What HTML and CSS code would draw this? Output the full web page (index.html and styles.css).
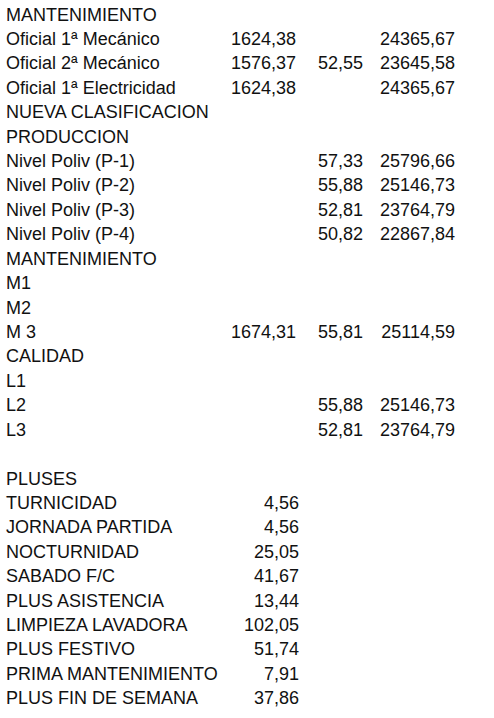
FILE: index.html
```html
<!DOCTYPE html>
<html lang="es">
<head>
<meta charset="utf-8">
<title>Tabla salarial</title>
<link rel="stylesheet" href="styles.css">
</head>
<body>
<div class="sheet">
  <div class="grid">
    <div class="row"><span class="lbl">MANTENIMIENTO</span><span></span><span></span><span></span></div>
    <div class="row"><span class="lbl">Oficial 1ª Mecánico</span><span class="num">1624,38</span><span class="num"></span><span class="num">24365,67</span></div>
    <div class="row"><span class="lbl">Oficial 2ª Mecánico</span><span class="num">1576,37</span><span class="num">52,55</span><span class="num">23645,58</span></div>
    <div class="row"><span class="lbl">Oficial 1ª Electricidad</span><span class="num">1624,38</span><span class="num"></span><span class="num">24365,67</span></div>
    <div class="row"><span class="lbl">NUEVA CLASIFICACION</span><span></span><span></span><span></span></div>
    <div class="row"><span class="lbl">PRODUCCION</span><span></span><span></span><span></span></div>
    <div class="row"><span class="lbl">Nivel Poliv (P-1)</span><span class="num"></span><span class="num">57,33</span><span class="num">25796,66</span></div>
    <div class="row"><span class="lbl">Nivel Poliv (P-2)</span><span class="num"></span><span class="num">55,88</span><span class="num">25146,73</span></div>
    <div class="row"><span class="lbl">Nivel Poliv (P-3)</span><span class="num"></span><span class="num">52,81</span><span class="num">23764,79</span></div>
    <div class="row"><span class="lbl">Nivel Poliv (P-4)</span><span class="num"></span><span class="num">50,82</span><span class="num">22867,84</span></div>
    <div class="row"><span class="lbl">MANTENIMIENTO</span><span></span><span></span><span></span></div>
    <div class="row"><span class="lbl">M1</span><span></span><span></span><span></span></div>
    <div class="row"><span class="lbl">M2</span><span></span><span></span><span></span></div>
    <div class="row"><span class="lbl">M 3</span><span class="num">1674,31</span><span class="num">55,81</span><span class="num">25114,59</span></div>
    <div class="row"><span class="lbl">CALIDAD</span><span></span><span></span><span></span></div>
    <div class="row"><span class="lbl">L1</span><span></span><span></span><span></span></div>
    <div class="row"><span class="lbl">L2</span><span class="num"></span><span class="num">55,88</span><span class="num">25146,73</span></div>
    <div class="row"><span class="lbl">L3</span><span class="num"></span><span class="num">52,81</span><span class="num">23764,79</span></div>
    <div class="row"><span class="lbl">&nbsp;</span><span></span><span></span><span></span></div>
  </div>
  <div class="grid plus">
    <div class="row"><span class="lbl">PLUSES</span><span></span></div>
    <div class="row"><span class="lbl">TURNICIDAD</span><span class="num">4,56</span></div>
    <div class="row"><span class="lbl">JORNADA PARTIDA</span><span class="num">4,56</span></div>
    <div class="row"><span class="lbl">NOCTURNIDAD</span><span class="num">25,05</span></div>
    <div class="row"><span class="lbl">SABADO F/C</span><span class="num">41,67</span></div>
    <div class="row"><span class="lbl">PLUS ASISTENCIA</span><span class="num">13,44</span></div>
    <div class="row"><span class="lbl">LIMPIEZA LAVADORA</span><span class="num">102,05</span></div>
    <div class="row"><span class="lbl">PLUS FESTIVO</span><span class="num">51,74</span></div>
    <div class="row"><span class="lbl">PRIMA MANTENIMIENTO</span><span class="num">7,91</span></div>
    <div class="row"><span class="lbl">PLUS FIN DE SEMANA</span><span class="num">37,86</span></div>
  </div>
</div>
</body>
</html>
```
FILE: styles.css
```css
html, body {
  margin: 0;
  padding: 0;
  background: #ffffff;
}
.sheet {
  padding: 2.5px 0 0 6px;
  font-family: "Liberation Sans", Arial, sans-serif;
  font-size: 18px;
  color: #111111;
}
.grid {
  display: flex;
  flex-direction: column;
}
.row {
  display: grid;
  grid-template-columns: 220px 70px 67px 92px;
  height: 24.43px;
  line-height: 24.43px;
  white-space: nowrap;
}
.plus .row {
  grid-template-columns: 220px 73px;
}
.num {
  text-align: right;
}
```
